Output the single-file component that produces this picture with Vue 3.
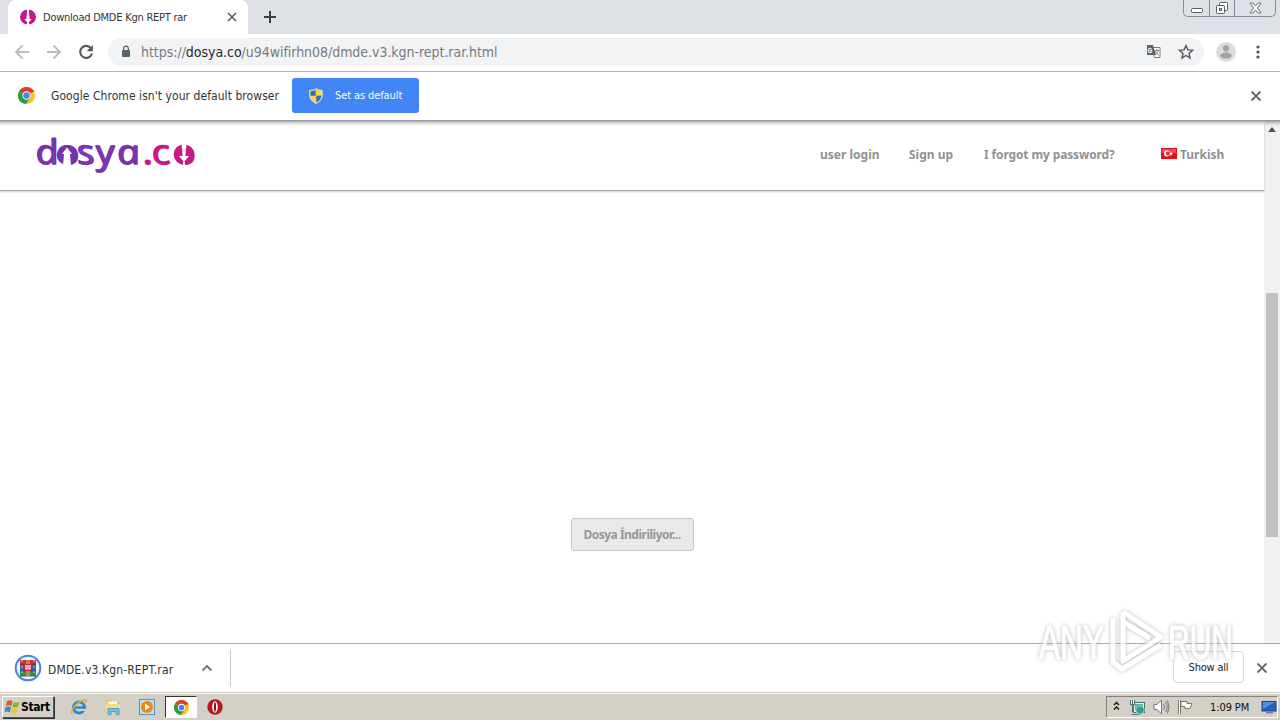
<!-- App.vue -->
<template>
  <div class="desktop">
    <!-- Tab strip -->
    <div class="tab-strip">
      <div class="tab">
        <svg class="favicon" width="16" height="16" viewBox="0 0 16 16">
          <ellipse cx="8" cy="8" rx="8" ry="7.6" fill="#c2188b" />
          <path d="M7 0h2v2.500l.6 7.500h2L8 14.500 4.400 10h2L7 2.500zM7 14h2v2H7z" fill="#fff" />
        </svg>
        <span class="tab-title">Download DMDE Kgn REPT rar</span>
        <svg class="tab-close" width="10" height="10" viewBox="0 0 10 10">
          <path d="M1 1l8 8M9 1l-8 8" stroke="#5f6368" stroke-width="1.7" />
        </svg>
      </div>
      <svg class="new-tab" width="14" height="14" viewBox="0 0 14 14">
        <path d="M7 1v12M1 7h12" stroke="#3c4043" stroke-width="2" />
      </svg>
      <div class="window-buttons">
        <span class="win-btn min">
          <svg width="12" height="6" viewBox="0 0 12 6"><rect x=".5" y=".5" width="11" height="4" rx="1" fill="#fff" stroke="#555b69" /></svg>
        </span>
        <span class="win-btn max">
          <svg width="14" height="14" viewBox="0 0 14 14" fill="#fff" stroke="#555b69">
            <rect x="4.500" y="1.500" width="8" height="8" rx="1" />
            <rect x="1.500" y="4.500" width="8" height="8" rx="1" />
            <rect x="4.500" y="7.500" width="2" height="2" />
          </svg>
        </span>
        <span class="win-btn close">
          <svg width="13" height="12" viewBox="0 0 13 12">
            <path d="M1 1h3l2.500 3L9 1h3L8.500 6 12 11H9L6.500 8 4 11H1l3.500-5z" fill="#fff" stroke="#666c78" />
          </svg>
        </span>
      </div>
    </div>

    <!-- Toolbar -->
    <div class="toolbar">
      <svg class="nav-icon" width="16" height="16" viewBox="0 0 16 16"><path d="M15 8H2M8.500 1.500L2 8l6.500 6.500" fill="none" stroke="#babcbe" stroke-width="1.900" /></svg>
      <svg class="nav-icon" width="16" height="16" viewBox="0 0 16 16"><path d="M1 8h13M7.500 1.500L14 8l-6.500 6.500" fill="none" stroke="#babcbe" stroke-width="1.900" /></svg>
      <svg class="nav-icon reload" width="16" height="16" viewBox="0 0 16 16">
        <path d="M13.200 4.500A6 6 0 1 0 14 9.500" fill="none" stroke="#55585c" stroke-width="2.100" />
        <path d="M14.900 1v6.300H8.600z" fill="#55585c" />
      </svg>
      <div class="omnibox">
        <svg class="lock" width="10" height="13" viewBox="0 0 10 13">
          <rect x="1" y="5" width="8" height="7" rx="1" fill="#5f6368" />
          <path d="M2.700 5V3.500a2.300 2.300 0 0 1 4.600 0V5" fill="none" stroke="#5f6368" stroke-width="1.300" />
        </svg>
        <span class="url">https://<b>dosya.co</b>/u94wifirhn08/dmde.v3.kgn-rept.rar.html</span>
        <svg class="translate" width="15" height="15" viewBox="0 0 15 15">
          <path d="M6 3.500h8v10H8.500z" fill="#fff" stroke="#777b80" />
          <path d="M1 1h6l3 10H1z" fill="#5f6368" />
          <text x="1.600" y="8.600" font-size="7" font-weight="bold" fill="#fff" font-family="Roboto, sans-serif">G</text>
          <path d="M8.500 6.500H13M10.700 5v1.500M12.400 6.500c-.5 2-1.400 3.200-3 4.300M9.300 7.300c.8 1.800 1.900 3 3.400 3.900" fill="none" stroke="#777b80" stroke-width=".9" />
        </svg>
        <svg class="star" width="16" height="16" viewBox="0 0 16 16">
          <path d="M8 1.600l1.900 4.300 4.700.4-3.600 3.100 1.100 4.600L8 11.500 3.900 14 5 9.400 1.400 6.300l4.700-.4z" fill="none" stroke="#55585c" stroke-width="1.400" />
        </svg>
      </div>
      <svg class="avatar" width="20" height="20" viewBox="0 0 20 20">
        <circle cx="10" cy="10" r="10" fill="#dcdcdc" />
        <circle cx="10" cy="6.300" r="3.100" fill="#a2a2a2" />
        <ellipse cx="10" cy="13.600" rx="5.800" ry="3" fill="#a2a2a2" />
      </svg>
      <svg class="dots" width="4" height="14" viewBox="0 0 4 14" fill="#4d5054">
        <circle cx="2" cy="2" r="1.600" /><circle cx="2" cy="7" r="1.600" /><circle cx="2" cy="12" r="1.600" />
      </svg>
    </div>

    <!-- Default browser bar -->
    <div class="infobar">
      <svg class="chrome" width="17" height="17" viewBox="0 0 20 20">
        <circle cx="10" cy="10" r="10" fill="#fbc116" />
        <path d="M10 10L1.340 5A10 10 0 0 1 18.660 5z" fill="#e33b2e" />
        <path d="M10 10L1.340 5A10 10 0 0 0 9 20l5.300-7.500z" fill="#259b4b" />
        <path d="M10 5h8.660" stroke="#e33b2e" stroke-width="2" />
        <circle cx="10" cy="10" r="4.900" fill="#fff" /><circle cx="10" cy="10" r="3.800" fill="#4285f4" />
      </svg>
      <span class="infobar-text">Google Chrome isn't your default browser</span>
      <button class="default-btn">
        <svg width="14" height="16" viewBox="0 0 14 16">
          <path d="M7 .6C5 2 3 2.300.7 2.300v5C.8 11 3.500 14 7 15.400 10.500 14 13.200 11 13.300 7.300v-5C11 2.300 9 2 7 .6z" fill="#f8d648" stroke="#d7dce1" />
          <path d="M6.700 2v5.700H1.500V3.200C3.600 3 5.200 2.800 6.700 2zM7.300 7.700h5.200c-.4 3-2.500 5.300-5.200 6.500z" fill="#2d6cba" />
        </svg>
        <span>Set as default</span>
      </button>
      <svg class="infobar-close" width="12" height="12" viewBox="0 0 12 12"><path d="M1.500 1.500l9 9M10.500 1.500l-9 9" stroke="#686b6f" stroke-width="2" /></svg>
    </div>

    <!-- Web page -->
    <div class="viewport">
      <div class="page">
        <header class="site-header">
          <svg class="logo" width="162" height="40" viewBox="0 0 162 40">
            <defs>
              <linearGradient id="violet" x1="0" y1="0" x2="1" y2="1">
                <stop offset="0" stop-color="#5b2896" /><stop offset=".5" stop-color="#8e3cc0" /><stop offset="1" stop-color="#6a2aa5" />
              </linearGradient>
            </defs>
            <g class="logo-text" transform="scale(1.2 1) skewX(12)">
              <text x="-4.500 13 30.300 46.300 63.500" y="31.500" fill="url(#violet)" stroke="#7632ac">dosya</text>
              <text x="85 92.500 110.200" y="31.500" fill="#c91883" stroke="#c91883">.co</text>
            </g>
            <ellipse cx="32" cy="23" rx="10.300" ry="10" fill="#7632ac" />
            <path d="M32 15.500l-5 6.500h2l-1 12h8l-1-12h2z" fill="#fff" />
            <ellipse cx="149" cy="22.500" rx="10.300" ry="10" fill="#c91883" />
            <path d="M146.500 11l1 13H144l5 6 5-6h-3.500l1-13zM148 29h2v5h-2z" fill="#fff" />
          </svg>
          <nav class="site-nav">
            <a v-for="link in links" :key="link.text" :class="link.name">{{ link.text }}</a>
            <a class="language">
              <svg width="16" height="11" viewBox="0 0 16 11">
                <rect width="16" height="11" fill="#e3111b" /><rect x="1" y="1" width="14" height="4" fill="#f04c50" />
                <circle cx="6" cy="5.500" r="3" fill="#fff" /><circle cx="7" cy="5.500" r="2.100" fill="#e3252c" />
                <path d="M10 3.500l.6 1.400 1.600.2-1.300 1 .3 1.600-1.200-.9-1.300.8.400-1.500-1.100-1 1.500-.1z" fill="#fff" />
              </svg>
              <span>Turkish</span>
            </a>
          </nav>
        </header>
        <main class="content">
          <button class="download-btn">Dosya İndiriliyor...</button>
        </main>
      </div>
      <div class="scrollbar">
        <svg class="scroll-up" width="8" height="5" viewBox="0 0 8 5"><path d="M0 5l4-5 4 5z" fill="#505050" /></svg>
        <div class="thumb"></div>
      </div>
    </div>

    <!-- Download shelf -->
    <div class="shelf">
      <div class="download-item">
        <svg width="28" height="28" viewBox="0 0 28 28">
          <circle cx="14" cy="14" r="12.300" fill="#e9f2fd" stroke="#4685de" stroke-width="2" />
          <rect x="6" y="6" width="16" height="5" fill="#c52e48" /><rect x="6" y="11" width="16" height="6" fill="#3564c4" /><rect x="6" y="17" width="16" height="5" fill="#27985a" />
          <path d="M6 11h16M6 17h16M6 22h16" stroke="#35283c" stroke-width=".7" />
          <rect x="12" y="6" width="4" height="16" fill="#b98648" />
          <rect x="10" y="10" width="8" height="7" fill="#bf2937" /><path d="M12 11v4h4v-4M14 11v3" fill="none" stroke="#fff" stroke-width="1.200" />
          <path d="M8 6v16M20 6v16" stroke="#e3cb75" stroke-dasharray="2 3.500" />
        </svg>
        <span class="file-name">DMDE.v3.Kgn-REPT.rar</span>
        <svg class="chevron" width="12" height="8" viewBox="0 0 12 8"><path d="M1.500 6.500L6 2l4.500 4.500" fill="none" stroke="#707276" stroke-width="1.800" /></svg>
      </div>
      <div class="shelf-right">
        <button class="show-all">Show all</button>
        <svg width="12" height="12" viewBox="0 0 12 12"><path d="M1.500 1.500l9 9M10.500 1.500l-9 9" stroke="#686b6f" stroke-width="1.800" /></svg>
      </div>
    </div>

    <!-- Taskbar -->
    <div class="taskbar">
      <div class="start">
        <svg width="17" height="16" viewBox="0 0 16 16">
          <path d="M2.500 2.200C4.500.8 6 1 8 2.200L6.800 7.300C5 6 3.300 6 1.300 7.200z" fill="#e65325" />
          <path d="M9 2.700c2 1.200 3.800 1.100 6-.1l-1.400 5c-2 1.200-3.700 1.200-5.700.1z" fill="#83b632" />
          <path d="M1 8.300c2-1.200 3.700-1.100 5.500.1l-1.200 5C3.500 12.100 2 12.100 0 13.300z" fill="#3b86cf" />
          <path d="M7.600 8.900c1.900 1.100 3.700 1 5.700-.1l-1.300 5c-2 1.200-3.800 1.100-5.600 0z" fill="#f5c32c" />
        </svg>
        <span>Start</span>
      </div>
      <div class="quick-launch">
        <span class="task">
          <svg width="18" height="18" viewBox="0 0 18 18">
            <circle cx="9" cy="9.500" r="5.500" fill="none" stroke="#278bd0" stroke-width="3" />
            <path d="M4 9.500h10.500" stroke="#278bd0" stroke-width="2.400" /><path d="M11.500 11H17v2h-6z" fill="#d4d0c8" />
            <path d="M2.500 16C-1 14.500 5 5.500 12 2.500c3.500-1.500 5-.5 3.700 2" fill="none" stroke="#e5ad23" stroke-width="1.500" />
          </svg>
        </span>
        <span class="task">
          <svg width="18" height="18" viewBox="0 0 18 18">
            <path d="M2 2h6l1 2h7v10H2z" fill="#e8c762" /><path d="M4 3.500h9v6H4z" fill="#fffbe0" /><path d="M2 6h14v8H2z" fill="#f3dc83" />
            <path d="M4 16.500V10.500h11v6h-3v-3H7v3z" fill="#78bedc" stroke="#55a1c8" />
          </svg>
        </span>
        <span class="task">
          <svg width="18" height="18" viewBox="0 0 18 18">
            <rect x="1.500" y="1.500" width="15" height="15" fill="#c2dff0" stroke="#5794bd" /><circle cx="9" cy="9" r="6" fill="#f08713" /><path d="M7 5.500v7L12 9z" fill="#fff" />
          </svg>
        </span>
        <span class="task active">
          <svg width="15" height="15" viewBox="0 0 20 20">
            <circle cx="10" cy="10" r="10" fill="#fbc116" />
            <path d="M10 10L1.340 5A10 10 0 0 1 18.660 5z" fill="#e33b2e" />
            <path d="M10 10L1.340 5A10 10 0 0 0 9 20l5.300-7.500z" fill="#259b4b" />
            <path d="M10 5h8.660" stroke="#e33b2e" stroke-width="2" />
            <circle cx="10" cy="10" r="4.900" fill="#fff" /><circle cx="10" cy="10" r="3.800" fill="#4285f4" />
          </svg>
        </span>
        <span class="task">
          <svg width="16" height="16" viewBox="0 0 16 16"><circle cx="8" cy="8" r="7.700" fill="#b5171d" /><ellipse cx="8" cy="8" rx="2.800" ry="5.700" fill="#fff" /><ellipse cx="8" cy="8" rx="1.100" ry="4.700" fill="#8c1015" /></svg>
        </span>
      </div>
      <div class="tray">
        <svg class="expand" width="7" height="10" viewBox="0 0 7 10"><path d="M1 4l2.500-2.500L6 4M1 8.500L3.500 6 6 8.500" fill="none" stroke="#111" stroke-width="1.400" /></svg>
        <svg class="network" width="17" height="17" viewBox="0 0 17 17">
          <rect x="4.500" y="3.500" width="11" height="10" fill="#dff0ed" stroke="#42736f" /><rect x="6" y="5" width="8" height="7" fill="#63aaa9" />
          <path d="M1 1v5h5V1z" fill="#fff" /><path d="M1.500 1v4.500h4V1M3.500 1v12M2.500 15.500h9" fill="none" stroke="#5b7773" stroke-width="1.200" /><circle cx="11" cy="11" r="4.200" fill="#369e93" stroke="#c8eee6" stroke-width=".7" />
        </svg>
        <svg class="sound" width="17" height="16" viewBox="0 0 17 16">
          <path d="M1 5.500h3L8.500 1v14L4 10.500H1z" fill="#fff" stroke="#777" /><path d="M10.500 5q2 3 0 6M12.500 3q3.500 5 0 10M14.500 1.500q3 6.500 0 13" fill="none" stroke="#777" />
        </svg>
        <svg class="flag" width="17" height="16" viewBox="0 0 17 16">
          <path d="M2.500 1v14" stroke="#777" stroke-width="3" /><path d="M2.500 1v14" stroke="#fff" /><path d="M4 2.500h6v2h5l-2 5H8v-2H4z" fill="#fff" stroke="#777" />
        </svg>
        <span class="clock">1:09 PM</span>
        <svg class="show-desktop" width="16" height="15" viewBox="0 0 16 15"><rect x="1" y="1.500" width="14" height="9.500" fill="#2462bd" stroke="#164489" /><path d="M2 2h12L2 9z" fill="#4f91e1" /><path d="M5 12.500h7" stroke="#6488b8" stroke-width="2" /></svg>
      </div>
    </div>

    <!-- Watermark over the page corner -->
    <svg class="watermark" width="220" height="80" viewBox="0 0 220 80">
      <g class="mark-text">
        <text x="8" y="57" textLength="65" lengthAdjust="spacingAndGlyphs">ANY</text>
        <text x="137" y="57" textLength="65" lengthAdjust="spacingAndGlyphs">RUN</text>
      </g>
      <g class="mark-play">
        <path d="M82 16v44l9 7 39-24M92 10l38 25-38 24V10" />
        <path d="M92 20l27 16" />
      </g>
    </svg>
  </div>
</template>

<script setup>
const links = [
  { name: 'login', text: 'user login' },
  { name: 'signup', text: 'Sign up' },
  { name: 'forgot', text: 'I forgot my password?' }
];
</script>

<style>
body {
  overflow: hidden;
}
</style>

<style scoped>
* {
  box-sizing: border-box;
}

.desktop {
  position: relative;
  display: flex;
  flex-direction: column;
  width: 1280px;
  height: 720px;
  background: #fff;
  color: #333;
  font-family: 'DejaVu Sans Condensed', 'DejaVu Sans', sans-serif;
  font-size: 12px;
  white-space: nowrap;
}

svg {
  flex: none;
  display: block;
  overflow: visible;
}

button {
  font-family: inherit;
  white-space: nowrap;
}

.tab-strip {
  display: flex;
  height: 34px;
  padding-left: 8px;
  background: #dee1e6;
}

.tab {
  display: flex;
  align-items: center;
  width: 240px;
  padding: 0 11px 0 12px;
  background: #fff;
  border-radius: 8px 8px 0 0;
}

.tab-title {
  margin-left: 7px;
  font-size: 11px;
  letter-spacing: -0.24px;
}

.tab-close {
  margin-left: auto;
}

.new-tab {
  margin: 10px 0 0 15px;
}

.window-buttons {
  display: flex;
  width: 93px;
  height: 17px;
  margin-left: auto;
  margin-right: 4px;
  border: 1px solid #858b98;
  border-top: 0;
  border-radius: 0 0 5px 5px;
}

.win-btn {
  display: flex;
  justify-content: center;
  align-items: center;
  width: 25px;
}

.win-btn + .win-btn {
  border-left: 1px solid #858b98;
}

.win-btn.min {
  padding-top: 5px;
}

.win-btn.close {
  flex: 1;
}

.toolbar {
  display: flex;
  align-items: center;
  height: 38px;
  padding: 0 20px 2px 14px;
  border-bottom: 1px solid #b3b4b6;
}

.nav-icon {
  margin-right: 16px;
}

.reload {
  margin-right: 14px;
}

.omnibox {
  display: flex;
  align-items: center;
  width: 1096px;
  height: 28px;
  padding: 0 10px 0 13px;
  border-radius: 14px;
  background: #f1f3f4;
}

.url {
  margin-left: 10px;
  color: #777a7e;
  font-size: 14px;
  letter-spacing: -0.04px;
}

.url b {
  color: #25282b;
  font-weight: normal;
}

.translate {
  margin-left: auto;
  margin-right: 17px;
}

.avatar {
  margin-left: 12px;
}

.dots {
  margin-left: 20px;
}

.infobar {
  display: flex;
  align-items: center;
  height: 49px;
  padding: 0 18px 1px;
  border-bottom: 1px solid #999;
}

.infobar-text {
  width: 229px;
  margin-left: 16px;
  font-size: 12px;
  letter-spacing: 0.06px;
}

.default-btn {
  display: flex;
  align-items: center;
  width: 127px;
  height: 35px;
  margin-left: 12px;
  padding: 0 0 0 17px;
  border: 0;
  border-radius: 3px;
  background: #4285f4;
  color: #fff;
  font-size: 11px;
  letter-spacing: -0.1px;
}

.default-btn span {
  margin-left: 12px;
}

.infobar-close {
  margin-left: auto;
}

.viewport {
  display: flex;
  height: 522px;
  background: linear-gradient(#a5a5a5, #dcdcdc 2px, #fff 5px);
}

.page {
  width: 1264px;
}

.site-header {
  display: flex;
  height: 70px;
  padding: 11px 41px 0 35px;
  border-bottom: 1px solid #aaa;
  box-shadow: 0 1px 2px #ccc;
}

.logo-text {
  font-family: 'Open Sans', 'Noto Sans', sans-serif;
  font-size: 34px;
  font-style: italic;
  stroke-width: 1.3px;
  stroke-linejoin: round;
}

.site-nav {
  display: flex;
  align-items: center;
  height: 44px;
  margin-left: auto;
  color: #919191;
  font-family: 'Noto Sans', sans-serif;
  font-size: 12px;
  font-weight: bold;
}

.login {
  width: 89px;
}

.signup {
  width: 75px;
}

.forgot {
  width: 177px;
  letter-spacing: -0.13px;
}

.language {
  display: flex;
  align-items: center;
  width: 62px;
  gap: 3px;
}

.language svg {
  margin-bottom: 2px;
}

.content {
  display: flex;
  justify-content: center;
  padding-top: 327px;
}

.download-btn {
  width: 123px;
  height: 33px;
  padding: 0;
  border: 1px solid #c7c7c7;
  border-radius: 3px;
  background: #e9e9e9;
  color: #979797;
  font-family: 'Noto Sans', sans-serif;
  font-size: 12px;
  font-weight: bold;
  letter-spacing: -0.5px;
}

.scrollbar {
  width: 16px;
  padding: 6px 2px 0;
  background: rgba(0, 0, 0, 0.055);
}

.scroll-up {
  margin-left: 2px;
}

.thumb {
  height: 244px;
  margin-top: 161px;
  background: #c1c1c1;
}

.shelf {
  display: flex;
  align-items: center;
  justify-content: space-between;
  height: 49px;
  padding-bottom: 1px;
  border-top: 1px solid #aaa;
}

.download-item {
  display: flex;
  align-items: center;
  width: 231px;
  height: 38px;
  padding-left: 14px;
  border-right: 1px solid #ccc;
}

.file-name {
  width: 126px;
  margin-left: 6px;
  padding-top: 4px;
  font-size: 12px;
  letter-spacing: 0.14px;
}

.chevron {
  margin-left: 27px;
}

.shelf-right {
  display: flex;
  align-items: center;
  gap: 12px;
  padding-right: 12px;
}

.show-all {
  width: 71px;
  height: 32px;
  margin-bottom: 2px;
  padding: 1px 0 0;
  border: 1px solid #d8d8d8;
  border-radius: 4px;
  background: #fff;
  color: #222;
  font-size: 11px;
  letter-spacing: -0.2px;
}

.taskbar {
  display: flex;
  align-items: center;
  height: 28px;
  padding: 1px 2px 0;
  border-top: 1px solid #c8c5be;
  background: #d4d0c8;
  box-shadow: inset 0 1px #fff;
}

.start {
  display: flex;
  align-items: center;
  width: 52px;
  height: 22px;
  padding-left: 1px;
  border: 1px solid;
  border-color: #fff #555 #555 #fff;
  box-shadow: 1px 1px #333;
  color: #000;
  font-size: 12px;
  font-weight: bold;
  letter-spacing: -0.4px;
}

.quick-launch {
  display: flex;
  align-items: center;
  margin-left: 9px;
}

.task {
  display: flex;
  align-items: center;
  justify-content: center;
  width: 32px;
  height: 22px;
  margin-right: 2px;
}

.active {
  border: 1px solid;
  border-color: #333 #fff #fff #333;
  background: #fff;
}

.tray {
  display: flex;
  align-items: center;
  width: 172px;
  height: 22px;
  margin-left: auto;
  padding-left: 6px;
  border: 1px solid;
  border-color: #858179 #fff #fff #858179;
  color: #111;
}

.expand {
  margin-bottom: 3px;
}

.network {
  margin-left: 9px;
}

.sound {
  margin-left: 7px;
}

.flag {
  margin-left: 7px;
}

.clock {
  width: 40px;
  margin-left: 16px;
  font-size: 11px;
  letter-spacing: -0.1px;
}

.show-desktop {
  margin-left: 11px;
}

.watermark {
  position: absolute;
  left: 1031px;
  top: 602px;
  filter: drop-shadow(0 0 2px #aaa);
  opacity: 0.8;
}

.mark-text {
  fill: #fff;
  stroke: #fff;
  stroke-width: 1.2px;
  font-family: 'Liberation Sans', sans-serif;
  font-size: 49px;
}

.mark-play {
  fill: none;
  stroke: #fff;
  stroke-width: 5px;
  stroke-linejoin: round;
}
</style>
